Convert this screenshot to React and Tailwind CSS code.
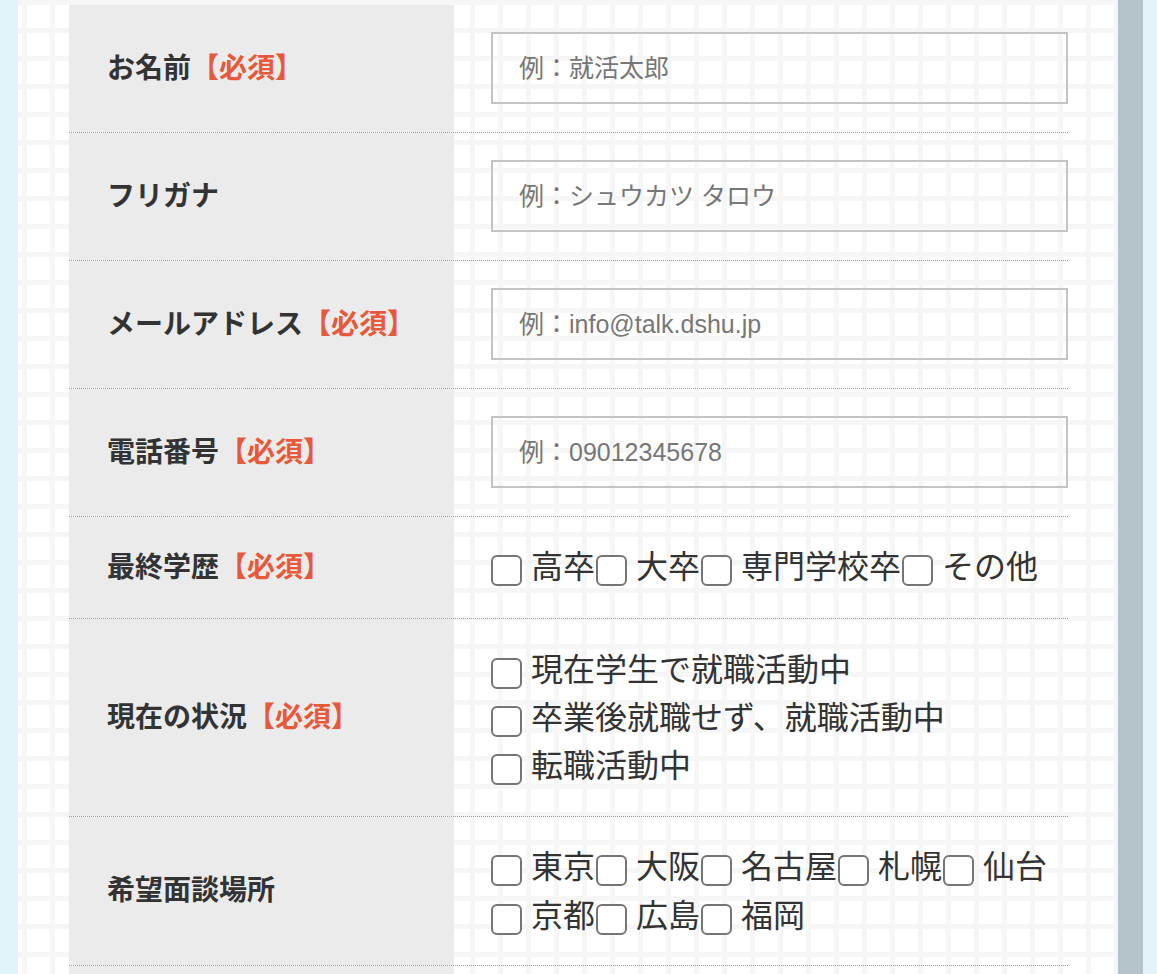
import React from "react";

const FONT = "font-['Liberation_Sans','Noto_Sans_CJK_JP',sans-serif]";

function Required() {
  return <span className="text-[#e8593a]">【必須】</span>;
}

function Check({ label }) {
  return (
    <label className="flex items-center">
      <span className="mt-[6px] mr-[9px] w-[31px] h-[31px] shrink-0 rounded-[6px] border-2 border-[#757575] bg-white" />
      <span>{label}</span>
    </label>
  );
}

function Row({ label, required, children, cellClass }) {
  return (
    <div className="grid grid-cols-[385px_1fr] border-b border-dotted border-[#9a9a9a]">
      <div className="flex items-center bg-[#ebebeb] pl-[38px] text-[28px] font-bold text-[#333]">
        <span>
          {label}
          {required && <Required />}
        </span>
      </div>
      <div className={"pl-[37px] " + cellClass}>{children}</div>
    </div>
  );
}

function TextRow({ label, required, placeholder }) {
  return (
    <Row label={label} required={required} cellClass="pt-[27px] pb-[28px]">
      <input
        type="text"
        placeholder={placeholder}
        className="block w-full h-[72px] border-2 border-[#c4c4c4] bg-transparent pl-[26px] text-[25px] text-[#333] placeholder:text-[#777] outline-none"
      />
    </Row>
  );
}

export default function App() {
  return (
    <div className={"flex min-h-[974px] bg-[#e2f3f9] " + FONT}>
      <div className="w-[18px] shrink-0" />
      <div className="w-[1100px] shrink-0 bg-white bg-[image:linear-gradient(to_right,#f6f6f6_5px,transparent_5px),linear-gradient(to_bottom,#f6f6f6_5px,transparent_5px)] bg-[size:28px_28px] bg-[position:4px_0px] pl-[51px] pr-[50px] pt-[5px]">
        <TextRow label="お名前" required placeholder="例：就活太郎" />
        <TextRow label="フリガナ" placeholder="例：シュウカツ タロウ" />
        <TextRow label="メールアドレス" required placeholder="例：info@talk.dshu.jp" />
        <TextRow label="電話番号" required placeholder="例：09012345678" />

        <Row label="最終学歴" required cellClass="pt-[26px] pb-[27px] text-[32px] leading-[48px] text-[#333]">
          <div className="flex flex-wrap gap-x-[1px]">
            {["高卒", "大卒", "専門学校卒", "その他"].map((t) => (
              <Check key={t} label={t} />
            ))}
          </div>
        </Row>

        <Row label="現在の状況" required cellClass="pt-[27px] pb-[26px] text-[32px] leading-[48px] text-[#333]">
          <div className="flex flex-col">
            {["現在学生で就職活動中", "卒業後就職せず、就職活動中", "転職活動中"].map((t) => (
              <Check key={t} label={t} />
            ))}
          </div>
        </Row>

        <Row label="希望面談場所" cellClass="pt-[26px] pb-[24px] text-[32px] leading-[49px] text-[#333]">
          <div className="flex flex-wrap gap-x-[1px]">
            {["東京", "大阪", "名古屋", "札幌", "仙台", "京都", "広島", "福岡"].map((t) => (
              <Check key={t} label={t} />
            ))}
          </div>
        </Row>

        <Row label="" cellClass="pt-[27px] pb-[28px]">
          <textarea className="block w-full h-[200px] border-2 border-[#c4c4c4] bg-transparent" />
        </Row>
      </div>
      <div className="w-[25px] shrink-0 bg-[#b5c4ca]" />
      <div className="flex-1" />
    </div>
  );
}
